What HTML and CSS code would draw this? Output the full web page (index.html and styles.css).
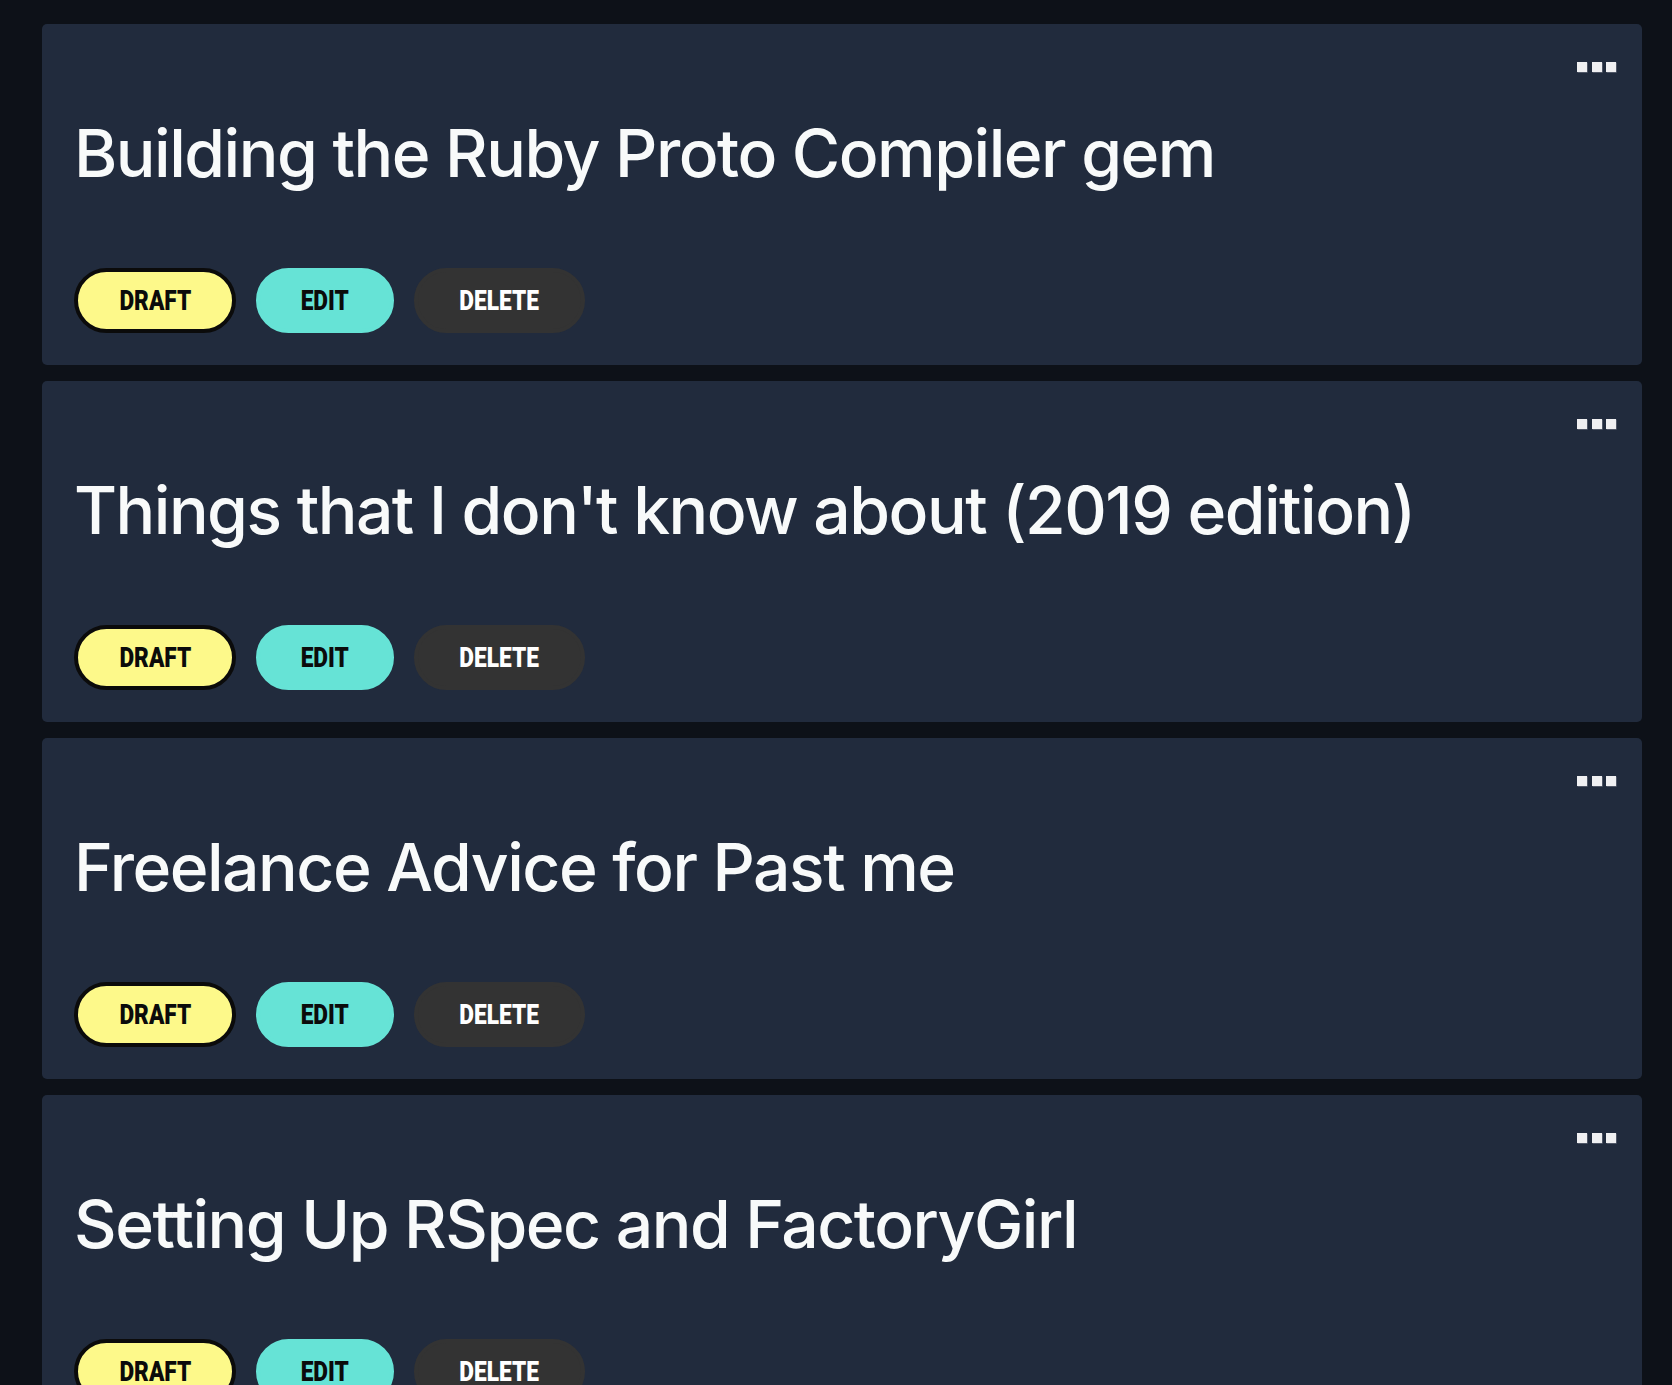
FILE: index.html
```html
<!DOCTYPE html>
<html lang="en">
<head>
<meta charset="utf-8">
<title>Posts</title>
<link rel="stylesheet" href="styles.css">
</head>
<body>
<main class="post-list">
  <article class="card">
    <div class="card-top">
      <button class="menu" aria-label="More"><span></span><span></span><span></span></button>
    </div>
    <h2 class="title">Building the Ruby Proto Compiler gem</h2>
    <div class="actions">
      <button class="pill pill-draft"><span class="label">DRAFT</span></button>
      <button class="pill pill-edit"><span class="label">EDIT</span></button>
      <button class="pill pill-delete"><span class="label">DELETE</span></button>
    </div>
  </article>
  <article class="card">
    <div class="card-top">
      <button class="menu" aria-label="More"><span></span><span></span><span></span></button>
    </div>
    <h2 class="title">Things that I don't know about (2019 edition)</h2>
    <div class="actions">
      <button class="pill pill-draft"><span class="label">DRAFT</span></button>
      <button class="pill pill-edit"><span class="label">EDIT</span></button>
      <button class="pill pill-delete"><span class="label">DELETE</span></button>
    </div>
  </article>
  <article class="card">
    <div class="card-top">
      <button class="menu" aria-label="More"><span></span><span></span><span></span></button>
    </div>
    <h2 class="title">Freelance Advice for Past me</h2>
    <div class="actions">
      <button class="pill pill-draft"><span class="label">DRAFT</span></button>
      <button class="pill pill-edit"><span class="label">EDIT</span></button>
      <button class="pill pill-delete"><span class="label">DELETE</span></button>
    </div>
  </article>
  <article class="card">
    <div class="card-top">
      <button class="menu" aria-label="More"><span></span><span></span><span></span></button>
    </div>
    <h2 class="title">Setting Up RSpec and FactoryGirl</h2>
    <div class="actions">
      <button class="pill pill-draft"><span class="label">DRAFT</span></button>
      <button class="pill pill-edit"><span class="label">EDIT</span></button>
      <button class="pill pill-delete"><span class="label">DELETE</span></button>
    </div>
  </article>
</main>
</body>
</html>
```
FILE: styles.css
```css
html, body {
  margin: 0;
  padding: 0;
  background: #0d1118;
}

body {
  font-family: Inter, "Noto Sans", sans-serif;
  color: #f8fafa;
}

.post-list {
  display: flex;
  flex-direction: column;
  gap: 16px;
  padding: 24px 30px 24px 42px;
}

.card {
  display: flex;
  flex-direction: column;
  height: 341px;
  box-sizing: border-box;
  padding: 32px 26px 32px 32px;
  background: #212b3d;
  border-radius: 5px;
}

.card-top {
  display: flex;
  justify-content: flex-end;
  height: 57px;
}

.menu {
  display: flex;
  gap: 4.5px;
  align-self: flex-start;
  margin-top: 5.7px;
  padding: 0;
  border: 0;
  background: none;
  cursor: pointer;
}

.menu span {
  display: block;
  width: 10px;
  height: 10px;
  background: #f0f0f2;
  box-shadow: 0.6px 0.6px 0 rgba(120, 125, 140, 0.9);
}

.title {
  margin: 0;
  font-size: 66px;
  font-weight: 500;
  line-height: 80px;
  letter-spacing: -1.5px;
  color: #f8fafa;
}

.actions {
  display: flex;
  gap: 20px;
  margin-top: auto;
}

.pill {
  display: flex;
  align-items: center;
  justify-content: center;
  box-sizing: border-box;
  height: 65px;
  padding: 0;
  border: 4px solid transparent;
  border-radius: 33px;
  font-family: Roboto, "Liberation Sans", sans-serif;
  font-weight: 900;
  font-size: 28px;
  cursor: pointer;
}

.label {
  display: inline-block;
  transform: scaleX(0.81);
}

.pill-draft {
  width: 162px;
  background: #fdf98a;
  border-color: #0b0b0b;
  color: #0b0b0b;
}

.pill-edit {
  width: 138px;
  background: #66e3d6;
  border-color: #66e3d6;
  color: #0b0b0b;
}

.pill-delete {
  width: 171px;
  background: #333333;
  border-color: #333333;
  color: #ffffff;
}
```
